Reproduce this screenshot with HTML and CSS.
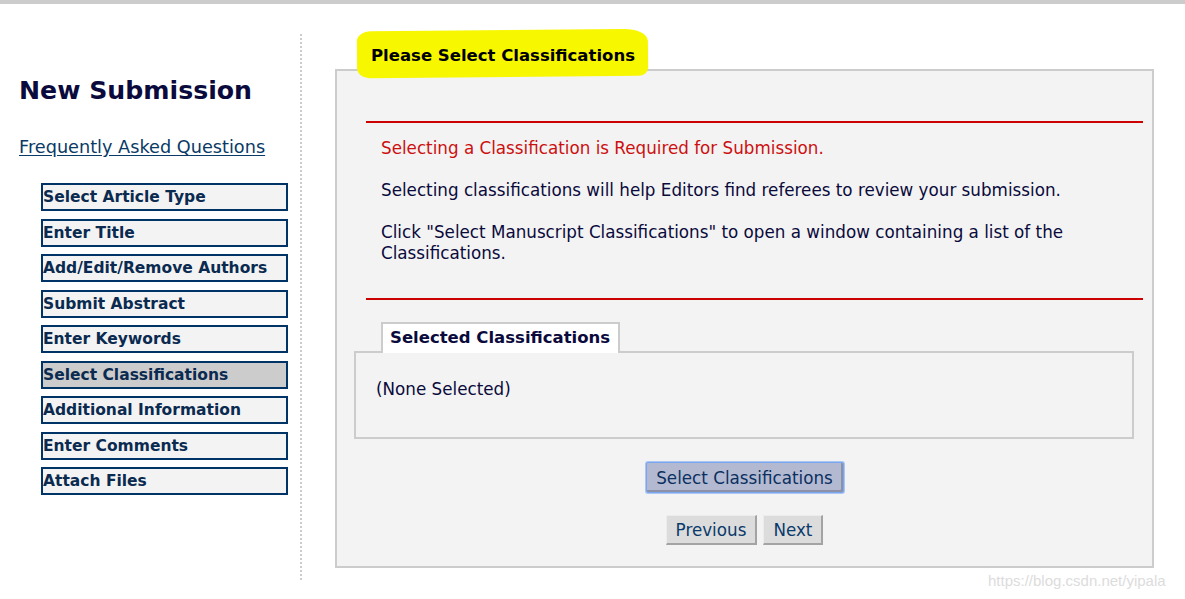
FILE: index.html
```html
<!DOCTYPE html>
<html>
<head>
<meta charset="utf-8">
<title>New Submission</title>
<link rel="stylesheet" href="styles.css">
</head>
<body>
<div class="topbar"></div>
<div class="page">
  <aside class="sidebar">
    <h1 class="title">New Submission</h1>
    <a class="faq" href="#">Frequently Asked Questions</a>
    <ul class="steps">
      <li class="step">Select Article Type</li>
      <li class="step">Enter Title</li>
      <li class="step">Add/Edit/Remove Authors</li>
      <li class="step">Submit Abstract</li>
      <li class="step">Enter Keywords</li>
      <li class="step active">Select Classifications</li>
      <li class="step">Additional Information</li>
      <li class="step">Enter Comments</li>
      <li class="step">Attach Files</li>
    </ul>
  </aside>
  <div class="divider"></div>
  <main class="main">
    <div class="tab-wrap">
      <div class="tab">Please Select Classifications</div>
    </div>
    <section class="panel">
      <div class="rule rule-top"></div>
      <div class="info">
        <p class="req">Selecting a Classification is Required for Submission.</p>
        <p>Selecting classifications will help Editors find referees to review your submission.</p>
        <p class="last">Click "Select Manuscript Classifications" to open a window containing a list of the Classifications.</p>
      </div>
      <div class="rule"></div>
      <div class="selected">
        <div class="sel-tab">Selected Classifications</div>
        <div class="sel-box">(None Selected)</div>
      </div>
      <div class="actions">
        <button class="btn-primary" type="button">Select Classifications</button>
      </div>
      <div class="pager">
        <button class="btn" type="button">Previous</button>
        <button class="btn" type="button">Next</button>
      </div>
    </section>
  </main>
</div>
<div class="watermark">https://blog.csdn.net/yipala</div>
</body>
</html>
```

FILE: styles.css
```css
* { box-sizing: border-box; }

html, body {
  margin: 0;
  padding: 0;
  background: #ffffff;
}

body {
  width: 1185px;
  height: 599px;
  overflow: hidden;
  position: relative;
  font-family: "DejaVu Sans", Verdana, sans-serif;
  font-size: 16.75px;
  color: #0a0a3c;
}

.topbar {
  height: 4px;
  background: #cccccc;
}

.page {
  display: flex;
  align-items: flex-start;
  padding-top: 30px;
}

/* Sidebar */
.sidebar {
  width: 300px;
  padding-left: 19px;
  display: flex;
  flex-direction: column;
  align-items: flex-start;
}

.title {
  margin: 42px 0 0 0;
  font-size: 25.2px;
  line-height: 30px;
  font-weight: bold;
  color: #0a0a3c;
}

.faq {
  margin-top: 30px;
  font-size: 17.7px;
  line-height: 22px;
  color: #0a3a66;
  text-decoration: underline;
  text-underline-offset: 2px;
}

.steps {
  list-style: none;
  margin: 25px 0 0 22px;
  padding: 0;
  display: flex;
  flex-direction: column;
  gap: 7.5px;
}

.step {
  width: 247px;
  height: 28px;
  border: 2px solid #003366;
  background: #f3f3f3;
  font-size: 15.5px;
  font-weight: bold;
  line-height: 24px;
  color: #0a2a50;
  padding-left: 0;
  white-space: nowrap;
}

.step.active {
  background: #cccccc;
}

.divider {
  width: 2px;
  height: 548px;
  background: repeating-linear-gradient(to bottom, #cccccc 0, #cccccc 2px, transparent 2px, transparent 4px);
}

/* Main */
.main {
  margin-left: 33px;
  width: 819px;
}

.tab-wrap {
  padding: 6px 0 0 27px;
  display: flex;
}

.tab {
  position: relative;
  z-index: 2;
  height: 31px;
  padding: 0 8px 0 7px;
  border: 2px solid #bfbf00;
  background: #f4f400;
  color: #000000;
  font-size: 16.5px;
  font-weight: bold;
  line-height: 27px;
  white-space: nowrap;
}

.tab::before {
  content: "";
  position: absolute;
  z-index: -1;
  left: -7px;
  right: -5px;
  top: -12px;
  bottom: -8px;
  background: #f7f700;
  border-radius: 14px 24px 10px 12px / 10px 12px 8px 10px;
  transform: rotate(-0.5deg);
}

.panel {
  position: relative;
  z-index: 1;
  margin-top: -2px;
  height: 499px;
  border: 2px solid #cccccc;
  background: #f3f3f3;
  display: flex;
  flex-direction: column;
}

.rule {
  height: 2px;
  margin: 0 9px 0 29px;
  background: #cc0000;
}

.rule-top {
  margin-top: 50px;
}

.info {
  padding: 14.5px 70px 34.5px 44px;
  line-height: 21px;
  color: #0a0a3c;
}

.info p {
  margin: 0 0 21px 0;
}

.info p.last {
  margin-bottom: 0;
}

.info .req {
  color: #cc1010;
}

.selected {
  margin: 22px 18px 0 17px;
  display: flex;
  flex-direction: column;
  align-items: flex-start;
}

.sel-tab {
  position: relative;
  z-index: 1;
  margin-left: 27px;
  margin-bottom: -2px;
  height: 31px;
  padding: 0 8px 0 7px;
  border: 2px solid #cccccc;
  border-bottom: none;
  background: #ffffff;
  font-size: 16.5px;
  font-weight: bold;
  line-height: 28px;
  color: #0a0a3c;
  white-space: nowrap;
}

.sel-box {
  align-self: stretch;
  height: 88px;
  border: 2px solid #cccccc;
  background: #f3f3f3;
  padding: 26px 0 0 20px;
  line-height: 21px;
  color: #0a0a3c;
}

.actions {
  margin-top: 23px;
  display: flex;
  justify-content: center;
}

.btn-primary {
  width: 198px;
  height: 31px;
  margin: 0;
  padding: 0;
  font-family: "DejaVu Sans", Verdana, sans-serif;
  font-size: 16.75px;
  color: #0a3060;
  background: #b4b9d2;
  border: 1px solid #79a6ee;
  border-radius: 2px;
  box-shadow: inset -2px -2px 0 #8b90a6, 0 0 0 1px #a9c6f4;
  cursor: pointer;
}

.pager {
  margin-top: 22px;
  display: flex;
  justify-content: center;
  gap: 6px;
}

.btn {
  height: 30px;
  margin: 0;
  padding: 0 9px;
  font-family: "DejaVu Sans", Verdana, sans-serif;
  font-size: 16.75px;
  color: #0a3a6a;
  background: #dcdcdc;
  border: 1px solid #ececec;
  border-right: 2px solid #a3a3a3;
  border-bottom: 2px solid #a3a3a3;
  border-radius: 0;
  cursor: pointer;
}

.watermark {
  position: absolute;
  left: 988px;
  top: 572px;
  font-family: "Liberation Sans", Arial, sans-serif;
  font-size: 15px;
  line-height: 18px;
  color: #dcdcdc;
  white-space: nowrap;
}
```
